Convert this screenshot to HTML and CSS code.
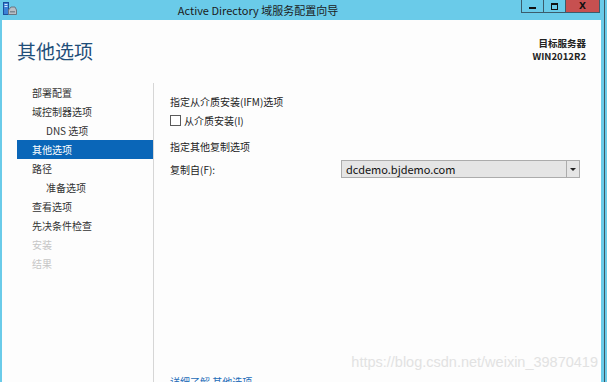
FILE: index.html
```html
<!doctype html>
<html lang="zh-CN">
<head>
  <meta charset="UTF-8" />
  <title>Active Directory 域服务配置向导</title>
  <link rel="stylesheet" href="styles.css">
</head>
<body>
  <div class="window">
    <div class="titlebar">
      <svg class="app-icon" width="14" height="13" viewBox="0 0 14 13">
        <rect x="0.5" y="0.5" width="5" height="12" fill="#3b82d6" stroke="#1c4f9c" />
        <rect x="1.5" y="2" width="3" height="1" fill="#cfe4ff" />
        <rect x="1.5" y="4" width="3" height="1" fill="#cfe4ff" />
        <path d="M5.5 8 L8 5 H12 L13.5 8 V12.5 H5.5 Z" fill="#b8bfc6" stroke="#6b7680" />
        <rect x="7" y="9" width="5" height="1.5" fill="#7d8891" />
      </svg>
      <div class="title">Active Directory 域服务配置向导</div>
      <div class="controls">
        <div class="ctl ctl-min"><span></span></div>
        <div class="ctl ctl-max"><span></span></div>
        <div class="ctl ctl-close">X</div>
      </div>
    </div>

    <div class="frame">
      <div class="header">
        <h1>其他选项</h1>
        <div class="server">
          <div>目标服务器</div>
          <div class="server-name">WIN2012R2</div>
        </div>
      </div>

      <div class="main">
        <ul class="nav">
          <li>部署配置</li>
          <li>域控制器选项</li>
          <li class="sub">DNS 选项</li>
          <li class="active">其他选项</li>
          <li>路径</li>
          <li class="sub">准备选项</li>
          <li>查看选项</li>
          <li>先决条件检查</li>
          <li class="disabled">安装</li>
          <li class="disabled">结果</li>
        </ul>

        <div class="content">
          <div class="section-title">指定从介质安装(IFM)选项</div>
          <label class="check-row"><span class="checkbox"></span>从介质安装(I)</label>
          <div class="section-title second">指定其他复制选项</div>
          <div class="field-row">
            <div class="field-label">复制自(F):</div>
            <div class="combo">
              <div class="combo-value">dcdemo.bjdemo.com</div>
              <div class="combo-btn"><span></span></div>
            </div>
          </div>
          <a class="more-link" href="#">详细了解 其他选项</a>
        </div>
      </div>
    </div>
  </div>

  <div class="watermark">https://blog.csdn.net/weixin_39870419</div>
</body>
</html>
```

FILE: styles.css
```css
body {
  margin: 0;
  width: 607px;
  height: 382px;
  overflow: hidden;
  background: #6acbe9;
  font-family: "Noto Sans CJK SC", "Noto Sans", sans-serif;
  color: #333;
  position: relative;
}
.window {
  width: 604px;
  height: 400px;
  border-right: 1px solid #3d5866;
  display: flex;
  flex-direction: column;
}
.titlebar {
  height: 20px;
  display: flex;
  align-items: flex-start;
  flex-shrink: 0;
}
.app-icon {
  margin: 2px 0 0 3px;
}
.title {
  flex: 1;
  text-align: center;
  font-size: 11px;
  line-height: 20px;
  color: #1b1b1b;
  padding-right: 22px;
}
.controls {
  display: flex;
  margin-right: 4px;
}
.ctl {
  height: 12px;
  border: 1px solid #3b5c6c;
  border-top: none;
  display: flex;
  align-items: center;
  justify-content: center;
}
.ctl + .ctl {
  border-left: none;
}
.ctl-min, .ctl-max {
  width: 21px;
}
.ctl-min span {
  width: 7px;
  height: 2px;
  background: #111;
  margin-top: 3px;
}
.ctl-max span {
  width: 5px;
  height: 4px;
  border: 1px solid #111;
  border-top-width: 2px;
}
.ctl-close {
  width: 33px;
  background: #c75050;
  color: #111;
  font-family: "DejaVu Sans", sans-serif;
  font-weight: bold;
  font-size: 9px;
}
.frame {
  flex: 1;
  margin: 0 3px 0 2px;
  background: #fdfdfd;
  display: flex;
  flex-direction: column;
}
.header {
  height: 63px;
  display: flex;
  justify-content: space-between;
  padding: 0 15px;
  flex-shrink: 0;
}
h1 {
  margin: 19px 0 0;
  font-size: 19px;
  line-height: 24px;
  font-weight: normal;
  color: #1f4e79;
}
.server {
  padding-top: 17px;
  text-align: right;
  font-size: 9.5px;
  line-height: 13px;
  font-weight: bold;
  color: #222;
}
.main {
  flex: 1;
  display: flex;
}
.nav {
  list-style: none;
  margin: 0 0 0 15px;
  padding: 0;
  width: 136px;
  border-right: 1px solid #d6d6d6;
  font-size: 10px;
}
.nav li {
  height: 19px;
  line-height: 19px;
  padding-left: 15px;
  color: #333;
}
.nav li.sub {
  padding-left: 29px;
}
.nav li.active {
  background: #0a66b8;
  color: #fff;
}
.nav li.disabled {
  color: #c6c6c6;
}
.content {
  flex: 1;
  display: flex;
  flex-direction: column;
  padding: 9px 0 11px 16px;
  font-size: 10px;
  color: #222;
}
.section-title {
  line-height: 19px;
}
.section-title.second {
  margin-top: 7px;
}
.check-row {
  display: flex;
  align-items: center;
  height: 19px;
}
.checkbox {
  width: 9px;
  height: 9px;
  border: 1px solid #5a5a5a;
  background: #fff;
  margin-right: 3px;
}
.field-row {
  display: flex;
  align-items: center;
  margin-top: 4px;
  height: 18px;
}
.field-label {
  width: 171px;
}
.combo {
  width: 237px;
  height: 16px;
  border: 1px solid #acacac;
  background: #e5e5e5;
  display: flex;
}
.combo-value {
  flex: 1;
  padding-left: 4px;
  font-size: 11px;
  line-height: 16px;
  color: #111;
}
.combo-btn {
  width: 12px;
  border-left: 1px solid #acacac;
  display: flex;
  align-items: center;
  justify-content: center;
}
.combo-btn span {
  width: 0;
  height: 0;
  border-left: 3px solid transparent;
  border-right: 3px solid transparent;
  border-top: 3px solid #222;
}
.more-link {
  margin-top: auto;
  line-height: 14px;
  color: #1c6cb8;
  text-decoration: none;
}
.watermark {
  position: absolute;
  right: 9px;
  top: 352px;
  font-family: "Liberation Sans", sans-serif;
  font-size: 14.5px;
  line-height: 20px;
  color: #e2e2e2;
}
```
